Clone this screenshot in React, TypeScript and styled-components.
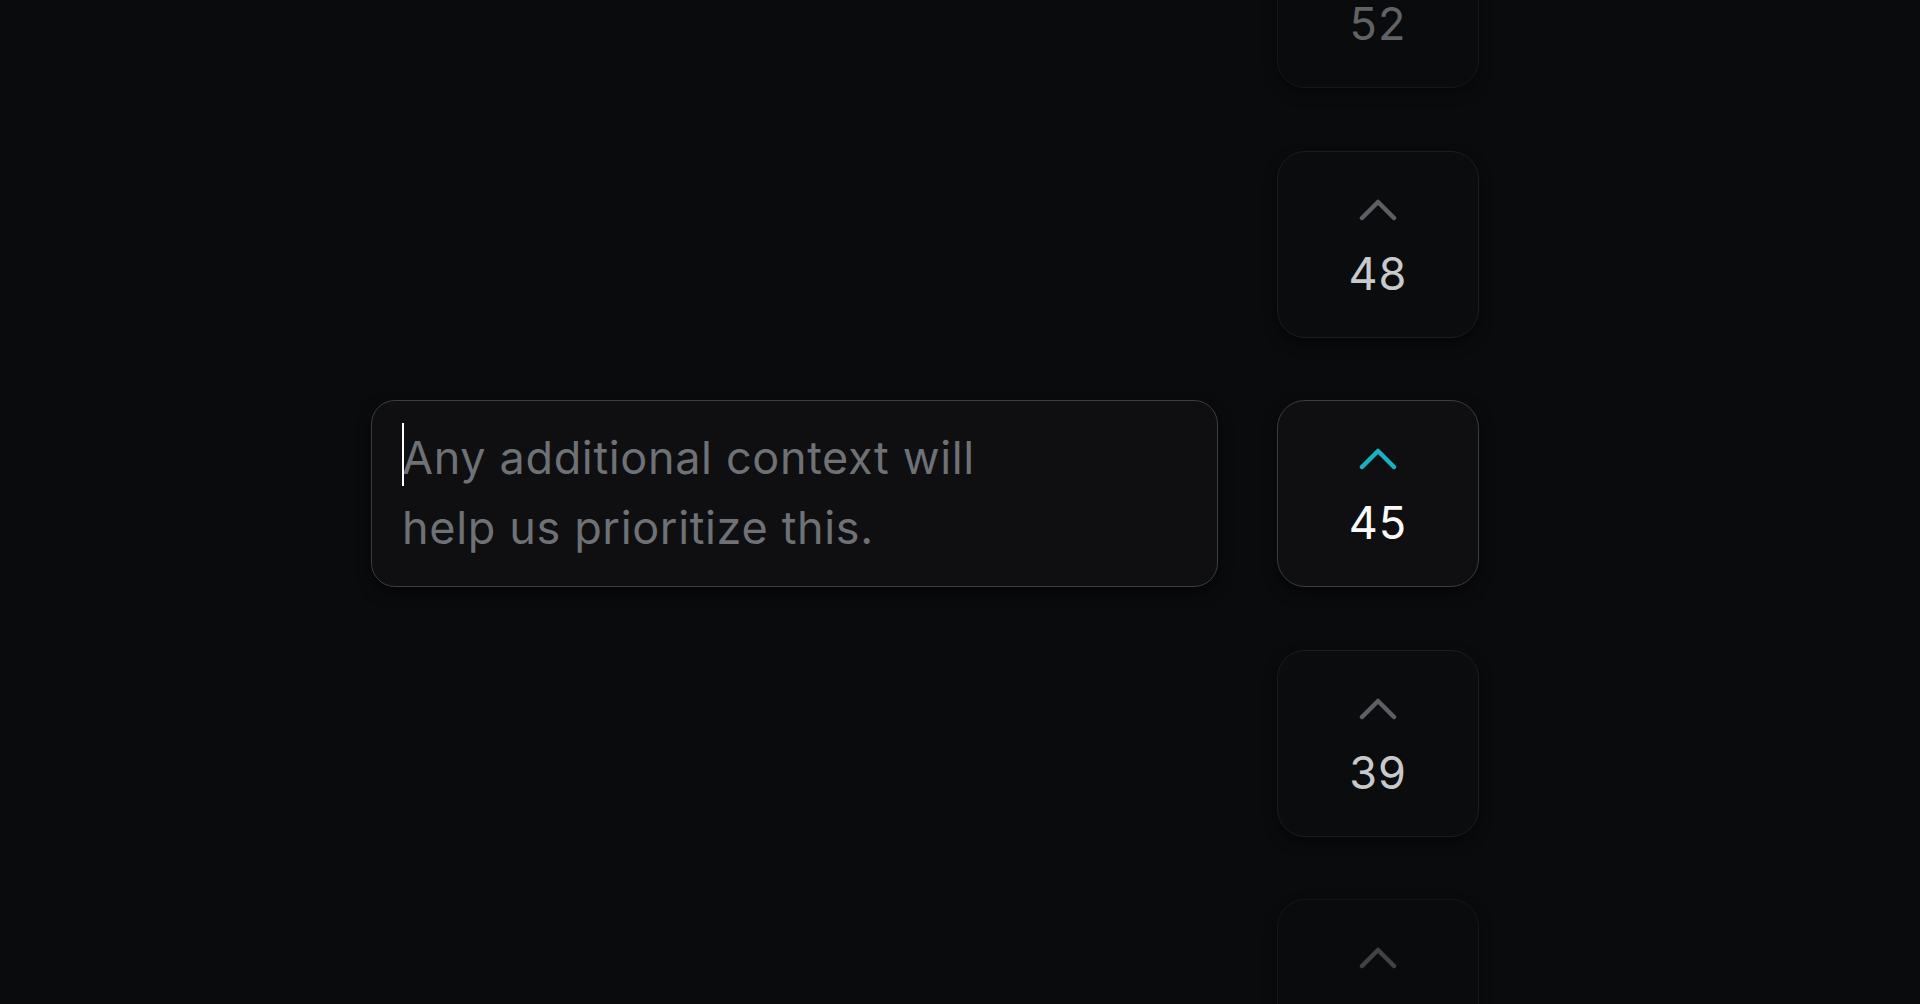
import React from "react";
import styled, { createGlobalStyle } from "styled-components";

const GlobalStyle = createGlobalStyle`
  html, body {
    margin: 0;
    padding: 0;
    background: #0a0b0d;
    overflow: hidden;
  }
  body {
    font-family: Inter, "Noto Sans", "Liberation Sans", sans-serif;
    -webkit-font-smoothing: antialiased;
  }
`;

const votes = [52, 48, 45, 39, 34];
const activeIndex = 2;
const CARD_H = 187;
const CARD_GAP = 62.5;
const ACTIVE_TOP = 400;

type Tone = { bg: string; border: string; chevron: string; num: string; shadow: string };

const tones: Tone[] = [
  { bg: "#0f0f11", border: "#3d3d40", chevron: "#17b1c3", num: "#fafafa", shadow: "0 6px 14px rgba(0,0,0,0.55)" },
  { bg: "#0b0c0e", border: "#1c1d20", chevron: "#5c5f63", num: "#c8c9cb", shadow: "0 6px 14px rgba(0,0,0,0.45)" },
  { bg: "#0a0b0d", border: "#16171a", chevron: "#404346", num: "#606366", shadow: "0 6px 14px rgba(0,0,0,0.35)" },
];

const Page = styled.div`
  width: 100vw;
  height: 100vh;
  overflow: hidden;
  background: #0a0b0d;
`;

const Layout = styled.div`
  width: 1178px;
  margin: 0 auto;
  display: grid;
  grid-template-columns: 847px 202px;
  column-gap: 59px;
  align-items: start;
`;

const Field = styled.div`
  position: relative;
  margin-top: ${ACTIVE_TOP}px;
`;

const Note = styled.textarea`
  display: block;
  box-sizing: border-box;
  width: 100%;
  height: ${CARD_H}px;
  margin: 0;
  padding: 22px 30px;
  resize: none;
  overflow: hidden;
  outline: none;
  border: 1px solid #3d3d40;
  border-radius: 24px;
  background: #0f0f11;
  box-shadow: 0 6px 14px rgba(0, 0, 0, 0.55);
  color: #f5f5f5;
  font-family: Inter, "Noto Sans", "Liberation Sans", sans-serif;
  font-size: 45px;
  line-height: 70px;
  letter-spacing: 0.65px;

  &::placeholder {
    color: #6e7175;
    opacity: 1;
  }
`;

const Caret = styled.span`
  position: absolute;
  left: 31px;
  top: 23px;
  width: 2px;
  height: 63px;
  background: #ffffff;
  pointer-events: none;
`;

const Picker = styled.div<{ $offset: number }>`
  display: flex;
  flex-direction: column;
  gap: ${CARD_GAP}px;
  transform: translateY(${(p) => p.$offset}px);
`;

const VoteCard = styled.button<{ $tone: Tone }>`
  box-sizing: border-box;
  width: 202px;
  height: ${CARD_H}px;
  flex-shrink: 0;
  display: flex;
  flex-direction: column;
  align-items: center;
  padding: 47px 0 0;
  gap: 26px;
  border-radius: 28px;
  border: 1px solid ${(p) => p.$tone.border};
  background: ${(p) => p.$tone.bg};
  box-shadow: ${(p) => p.$tone.shadow};
  cursor: pointer;
  color: ${(p) => p.$tone.chevron};
`;

const Count = styled.span<{ $color: string }>`
  font-family: Inter, "Noto Sans", "Liberation Sans", sans-serif;
  font-size: 45px;
  line-height: 54px;
  font-weight: 400;
  letter-spacing: 1px;
  color: ${(p) => p.$color};
`;

const Chevron = () => (
  <svg width="38" height="22" viewBox="0 0 38 22" fill="none">
    <polyline
      points="3,19 19,3 35,19"
      stroke="currentColor"
      strokeWidth="4.5"
      strokeLinecap="round"
      strokeLinejoin="round"
    />
  </svg>
);

const App = () => {
  const offset = ACTIVE_TOP - activeIndex * (CARD_H + CARD_GAP);
  return (
    <Page>
      <GlobalStyle />
      <Layout>
        <Field>
          <Note placeholder={"Any additional context will\nhelp us prioritize this."} />
          <Caret />
        </Field>
        <Picker $offset={offset}>
          {votes.map((v, i) => {
            const tone = tones[Math.min(Math.abs(i - activeIndex), 2)];
            return (
              <VoteCard key={v} $tone={tone}>
                <Chevron />
                <Count $color={tone.num}>{v}</Count>
              </VoteCard>
            );
          })}
        </Picker>
      </Layout>
    </Page>
  );
};

export default App;
